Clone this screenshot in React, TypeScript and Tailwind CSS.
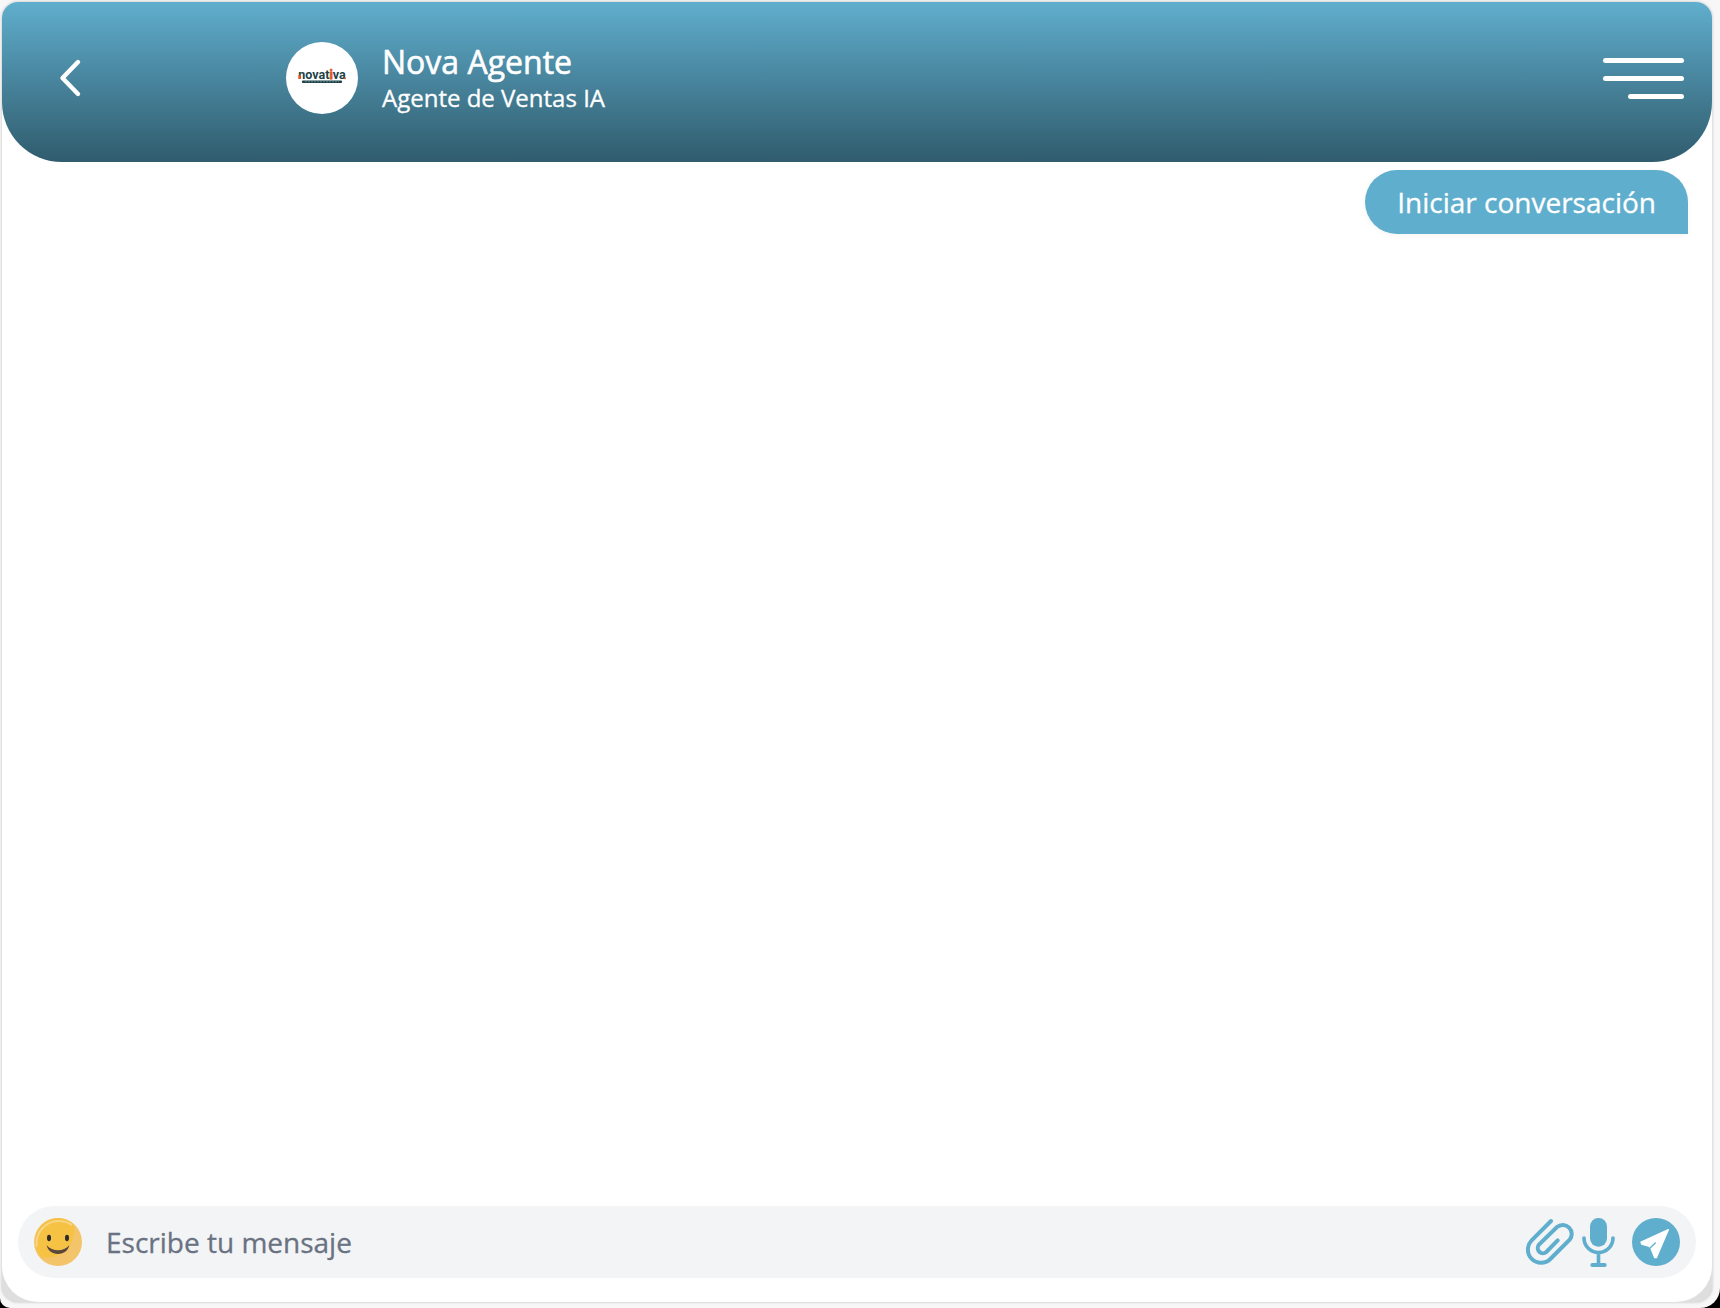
import React from "react";

function BackIcon() {
  return (
    <svg className="h-10 w-6" viewBox="0 0 24 40" fill="none" stroke="white" strokeWidth="4.4" strokeLinecap="round" strokeLinejoin="round" aria-hidden="true">
      <path d="M20 4 4.5 20 20 36" />
    </svg>
  );
}

function BrandLogo() {
  return (
    <svg className="h-6 w-14" viewBox="0 0 56 24" role="img" aria-label="novativa">
      <text x="28" y="13" textAnchor="middle" fontFamily="Roboto, sans-serif" fontWeight="700" fontSize="12.5" fill="#1d4248">
        novat<tspan fill="#e0561f" stroke="#e0561f" strokeWidth="0.8">i</tspan>va
      </text>
      <rect x="4.4" y="9" width="2.4" height="4" fill="#e0561f" />
      <circle cx="51" cy="12.2" r="1" fill="#e0561f" />
      <rect x="8" y="14.4" width="40" height="2.6" rx="0.8" fill="#1d4248" />
      <path d="M11 15.7h34" stroke="#8aa3a6" strokeWidth="0.6" strokeDasharray="2 1" />
    </svg>
  );
}

function SmileIcon() {
  return (
    <svg className="size-12" viewBox="0 0 144 144" aria-hidden="true">
      <circle cx="72" cy="72" r="72" fill="#f4c46a" />
      <path d="M120 20C126 80 90 124 22 118A70 70 0 0 1 4 72A68 68 0 0 1 120 20Z" fill="#f6c244" />
      <path d="M8 84C4 44 34 9 74 9c14 0 28 4 38 11" fill="none" stroke="#f8d583" strokeWidth="6" strokeLinecap="round" />
      <ellipse cx="45" cy="60" rx="6" ry="9.5" fill="#2d2a2b" />
      <ellipse cx="99" cy="60" rx="6" ry="9.5" fill="#2d2a2b" />
      <path d="M38 82c18 20 50 20 68 0-3 15-16 26-34 26S41 97 38 82Z" fill="#5a463c" />
    </svg>
  );
}

function ClipIcon() {
  return (
    <svg className="size-12" viewBox="0 0 144 144" fill="none" stroke="currentColor" strokeWidth="12" strokeLinecap="round" aria-hidden="true">
      <path d="M75 9 17 67A39.6 39.6 0 0 0 73 123L131 65A27 27 0 0 0 93 27L39 80A15.6 15.6 0 0 0 61 102L95 67" />
    </svg>
  );
}

function MicIcon() {
  return (
    <svg className="h-[49px] w-[33px]" viewBox="0 0 99 147" fill="none" stroke="currentColor" strokeWidth="11" strokeLinecap="round" aria-hidden="true">
      <rect x="24" y="0" width="51" height="86" rx="25" fill="currentColor" stroke="none" />
      <path d="M6 60a43.5 43.5 0 0 0 87 0M49.5 104v36" />
      <path d="M31 141h37" strokeWidth="12" />
    </svg>
  );
}

function SendIcon() {
  return (
    <svg className="size-12" viewBox="0 0 144 144" aria-hidden="true">
      <circle cx="72" cy="72" r="72" fill="#60aecd" />
      <path d="M109 35 27 72 29 78 50 84 57 91 68 119 73 119Z" fill="white" stroke="white" strokeWidth="4" strokeLinejoin="round" />
      <path d="M70 75 53 91" stroke="#60aecd" strokeWidth="4" strokeLinecap="round" />
    </svg>
  );
}

export default function App() {
  return (
    <div className="h-screen bg-black font-['Open_Sans',sans-serif]">
      <div className="h-full rounded-bl-[10px] rounded-br-[20px] bg-[#f7f7f7] pt-0.5 pr-2 pb-1.5 pl-0.5">
        <div className="h-full rounded-2xl bg-[#dedede] shadow-[0_0_3px_rgba(0,0,0,0.25)]">
          <div className="flex h-full flex-col rounded-t-2xl rounded-b-[36px] bg-white">
            <header className="flex h-40 shrink-0 items-center rounded-t-2xl rounded-b-[60px] bg-linear-to-b from-[#60aecd] to-[#305c6e] pr-7 pb-2 pl-14 text-white">
              <button type="button" aria-label="Volver" className="flex w-[228px]">
                <BackIcon />
              </button>
              <div className="flex flex-1 items-center gap-6">
                <div className="flex size-[72px] items-center justify-center rounded-full bg-white">
                  <BrandLogo />
                </div>
                <div>
                  <h1 className="text-[32px] leading-10 [-webkit-text-stroke:0.6px_white]">Nova Agente</h1>
                  <p className="text-2xl leading-8 [-webkit-text-stroke:0.3px_white]">Agente de Ventas IA</p>
                </div>
              </div>
              <button type="button" aria-label="Menú" className="flex w-[81px] flex-col items-end gap-[13px]">
                <span className="h-[5px] w-full rounded-full bg-white" />
                <span className="h-[5px] w-full rounded-full bg-white" />
                <span className="h-[5px] w-14 rounded-full bg-white" />
              </button>
            </header>

            <main className="flex flex-1 flex-col items-end px-6 pt-2">
              <p className="rounded-t-[32px] rounded-bl-[32px] bg-[#60aecd] px-8 py-3 text-[28px] leading-10 text-white shadow-[0_2px_6px_rgba(0,0,0,0.04)] [-webkit-text-stroke:0.3px_white]">
                Iniciar conversación
              </p>
            </main>

            <form className="mx-4 mb-6 flex h-[72px] shrink-0 items-center rounded-full bg-gray-100 px-4 text-[#60aecd]" onSubmit={(e) => e.preventDefault()}>
              <button type="button" aria-label="Emojis">
                <SmileIcon />
              </button>
              <input
                type="text"
                aria-label="Mensaje"
                placeholder="Escribe tu mensaje"
                className="ml-6 h-12 min-w-0 flex-1 bg-transparent text-[28px] text-gray-800 outline-none placeholder:text-gray-500 placeholder:[-webkit-text-stroke:0.3px_#6a7282]"
              />
              <button type="button" aria-label="Adjuntar archivo" className="mr-2">
                <ClipIcon />
              </button>
              <button type="button" aria-label="Grabar audio" className="mr-[17px]">
                <MicIcon />
              </button>
              <button type="submit" aria-label="Enviar">
                <SendIcon />
              </button>
            </form>
          </div>
        </div>
      </div>
    </div>
  );
}
